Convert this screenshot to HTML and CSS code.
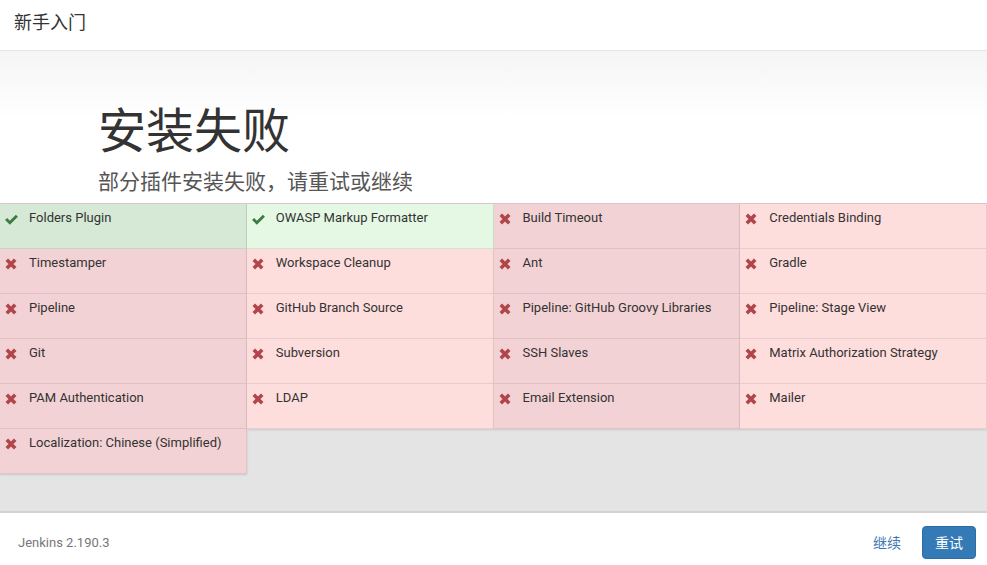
FILE: index.html
```html
<!DOCTYPE html>
<html>
<head>
    <meta charset="utf-8">
    <title>新手入门</title>
    <link rel="stylesheet" href="styles.css">
</head>
<body>
<div class="wizard">
  <div class="wizard-header">新手入门</div>

  <div class="hero">
    <h1>安装失败</h1>
    <p class="lead">部分插件安装失败，请重试或继续</p>
  </div>

  <div class="install-status">
    <div class="plugin-grid">
      <div class="plugin ok"><svg class="icon" viewBox="0 0 14 12"><path d="M0 6.6 L2.2 4.4 L5.2 7.3 L11.8 0.7 L14 2.9 L5.2 11.6 Z"/></svg>Folders Plugin</div>
      <div class="plugin ok"><svg class="icon" viewBox="0 0 14 12"><path d="M0 6.6 L2.2 4.4 L5.2 7.3 L11.8 0.7 L14 2.9 L5.2 11.6 Z"/></svg>OWASP Markup Formatter</div>
      <div class="plugin fail"><svg class="icon" viewBox="0 0 12 12"><path d="M1.8 1.8 L10.2 10.2 M10.2 1.8 L1.8 10.2"/></svg>Build Timeout</div>
      <div class="plugin fail"><svg class="icon" viewBox="0 0 12 12"><path d="M1.8 1.8 L10.2 10.2 M10.2 1.8 L1.8 10.2"/></svg>Credentials Binding</div>

      <div class="plugin fail"><svg class="icon" viewBox="0 0 12 12"><path d="M1.8 1.8 L10.2 10.2 M10.2 1.8 L1.8 10.2"/></svg>Timestamper</div>
      <div class="plugin fail"><svg class="icon" viewBox="0 0 12 12"><path d="M1.8 1.8 L10.2 10.2 M10.2 1.8 L1.8 10.2"/></svg>Workspace Cleanup</div>
      <div class="plugin fail"><svg class="icon" viewBox="0 0 12 12"><path d="M1.8 1.8 L10.2 10.2 M10.2 1.8 L1.8 10.2"/></svg>Ant</div>
      <div class="plugin fail"><svg class="icon" viewBox="0 0 12 12"><path d="M1.8 1.8 L10.2 10.2 M10.2 1.8 L1.8 10.2"/></svg>Gradle</div>

      <div class="plugin fail"><svg class="icon" viewBox="0 0 12 12"><path d="M1.8 1.8 L10.2 10.2 M10.2 1.8 L1.8 10.2"/></svg>Pipeline</div>
      <div class="plugin fail"><svg class="icon" viewBox="0 0 12 12"><path d="M1.8 1.8 L10.2 10.2 M10.2 1.8 L1.8 10.2"/></svg>GitHub Branch Source</div>
      <div class="plugin fail"><svg class="icon" viewBox="0 0 12 12"><path d="M1.8 1.8 L10.2 10.2 M10.2 1.8 L1.8 10.2"/></svg>Pipeline: GitHub Groovy Libraries</div>
      <div class="plugin fail"><svg class="icon" viewBox="0 0 12 12"><path d="M1.8 1.8 L10.2 10.2 M10.2 1.8 L1.8 10.2"/></svg>Pipeline: Stage View</div>

      <div class="plugin fail"><svg class="icon" viewBox="0 0 12 12"><path d="M1.8 1.8 L10.2 10.2 M10.2 1.8 L1.8 10.2"/></svg>Git</div>
      <div class="plugin fail"><svg class="icon" viewBox="0 0 12 12"><path d="M1.8 1.8 L10.2 10.2 M10.2 1.8 L1.8 10.2"/></svg>Subversion</div>
      <div class="plugin fail"><svg class="icon" viewBox="0 0 12 12"><path d="M1.8 1.8 L10.2 10.2 M10.2 1.8 L1.8 10.2"/></svg>SSH Slaves</div>
      <div class="plugin fail"><svg class="icon" viewBox="0 0 12 12"><path d="M1.8 1.8 L10.2 10.2 M10.2 1.8 L1.8 10.2"/></svg>Matrix Authorization Strategy</div>

      <div class="plugin fail"><svg class="icon" viewBox="0 0 12 12"><path d="M1.8 1.8 L10.2 10.2 M10.2 1.8 L1.8 10.2"/></svg>PAM Authentication</div>
      <div class="plugin fail"><svg class="icon" viewBox="0 0 12 12"><path d="M1.8 1.8 L10.2 10.2 M10.2 1.8 L1.8 10.2"/></svg>LDAP</div>
      <div class="plugin fail"><svg class="icon" viewBox="0 0 12 12"><path d="M1.8 1.8 L10.2 10.2 M10.2 1.8 L1.8 10.2"/></svg>Email Extension</div>
      <div class="plugin fail"><svg class="icon" viewBox="0 0 12 12"><path d="M1.8 1.8 L10.2 10.2 M10.2 1.8 L1.8 10.2"/></svg>Mailer</div>

      <div class="plugin fail"><svg class="icon" viewBox="0 0 12 12"><path d="M1.8 1.8 L10.2 10.2 M10.2 1.8 L1.8 10.2"/></svg>Localization: Chinese (Simplified)</div>
    </div>
  </div>

  <div class="wizard-footer">
    <span class="version">Jenkins 2.190.3</span>
    <div class="actions">
      <a class="btn-link" href="#">继续</a>
      <button class="btn-primary">重试</button>
    </div>
  </div>
</div>
</body>
</html>
```

FILE: styles.css
```css
html, body {
  height: 100%;
  margin: 0;
  overflow: hidden;
}
body {
  font-family: Roboto, "Noto Sans CJK SC", sans-serif;
  color: #333;
  background: #fff;
}
.wizard {
  display: flex;
  flex-direction: column;
  height: 100%;
}

.wizard-header {
  height: 50px;
  line-height: 46px;
  padding-left: 14px;
  font-size: 18px;
  color: #333;
  border-bottom: 1px solid #e5e5e5;
  flex: none;
}

.hero {
  flex: none;
  height: 152px;
  padding-left: 98px;
  background: linear-gradient(#f5f5f5, #fff 45%);
  box-sizing: border-box;
  padding-top: 53px;
}
.hero h1 {
  margin: 0;
  font-size: 48px;
  font-weight: normal;
  line-height: 56px;
  color: #333;
}
.hero .lead {
  margin: 0;
  margin-top: 9px;
  font-size: 21px;
  line-height: 26px;
  color: #555;
}

.install-status {
  flex: 1;
  background: #e4e4e4;
  overflow: hidden;
}
.plugin-grid {
  display: grid;
  grid-template-columns: repeat(4, 1fr);
  border-top: 1px solid #dcc7c7;
}
.plugin {
  height: 45px;
  box-sizing: border-box;
  padding: 5px 6px 0 29px;
  font-size: 13px;
  line-height: 18px;
  color: #333;
  position: relative;
  border-right: 1px solid rgba(0, 0, 0, 0.07);
  border-bottom: 1px solid rgba(0, 0, 0, 0.07);
  box-shadow: 0 1px 2px rgba(0, 0, 0, 0.12);
}
.plugin .icon {
  position: absolute;
  left: 5px;
  top: 10px;
  width: 13px;
  height: 11px;
}
.plugin.ok .icon {
  fill: #3d7b3f;
}
.plugin.fail .icon {
  left: 5px;
  top: 9px;
  width: 12px;
  height: 12px;
  fill: none;
  stroke: #b0464a;
  stroke-width: 3.6;
}
.plugin.ok:nth-child(odd) {
  background: #d6e9d7;
}
.plugin.ok:nth-child(even) {
  background: #e4f8e4;
}
.plugin.fail:nth-child(odd) {
  background: #f2d2d4;
}
.plugin.fail:nth-child(even) {
  background: #fedddd;
}

.wizard-footer {
  flex: none;
  height: 54px;
  box-sizing: border-box;
  border-top: 2px solid #d2d2d2;
  display: flex;
  align-items: center;
  justify-content: space-between;
  padding: 6px 11px 0 18px;
}
.version {
  font-size: 13px;
  color: #777;
}
.actions {
  display: flex;
  align-items: center;
  gap: 21px;
}
.btn-link {
  font-size: 14px;
  color: #3d78b3;
  text-decoration: none;
}
.btn-primary {
  width: 54px;
  height: 33px;
  border: 1px solid #2e6da4;
  border-radius: 4px;
  background: #337ab7;
  color: #fff;
  font-family: "Noto Sans CJK SC", sans-serif;
  font-size: 14px;
  padding: 0;
}
```
